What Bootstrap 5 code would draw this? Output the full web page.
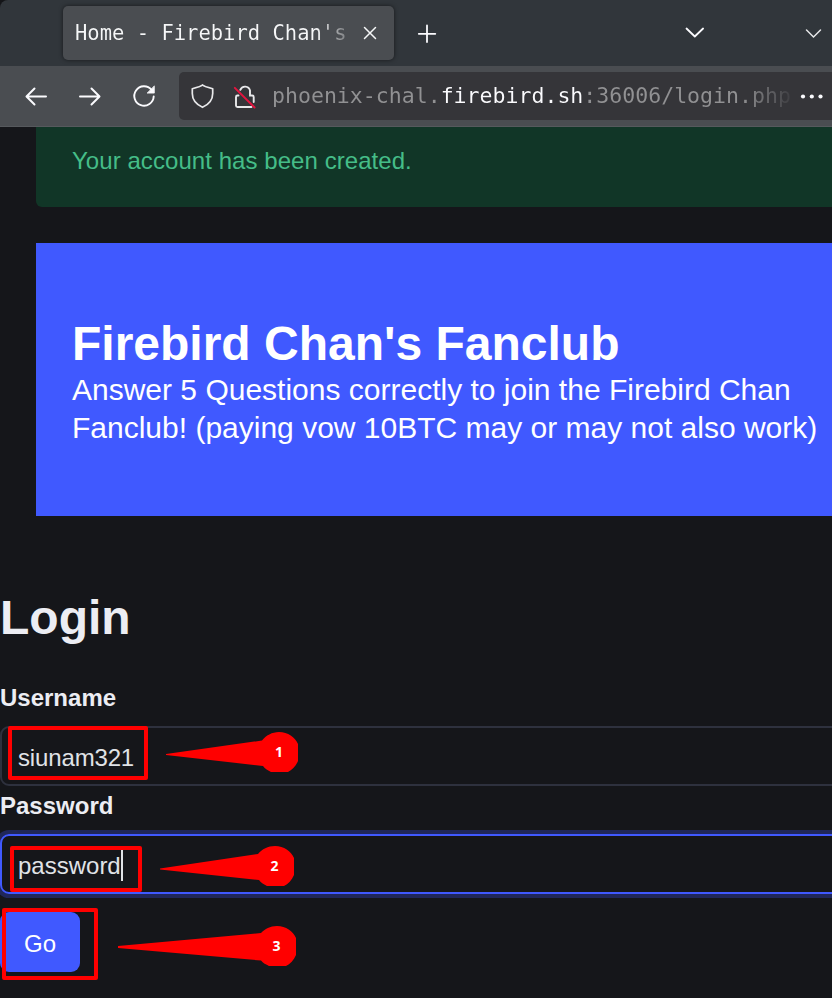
<!DOCTYPE html>
<html lang="en" data-bs-theme="dark">
<head>
<meta charset="utf-8">
<meta name="viewport" content="width=device-width, initial-scale=1">
<title>Home - Firebird Chan's Fanclub</title>
<link rel="stylesheet" href="https://cdn.jsdelivr.net/npm/bootstrap@5.3.0/dist/css/bootstrap.min.css">
<style>
  html, body { height: 998px; overflow: hidden; }
  body { background: #15161a; color: #ecedf3; font: 24px/36px "Liberation Sans", Arial, sans-serif; }
  svg { display: block; flex: none; }
  .mono { font-family: "DejaVu Sans Mono", monospace; white-space: pre; }
  .tabcorner { background: #141518; }
  .tabstrip { height: 66px; background: #31363b; padding: 6px 0 6px 63px; border-top-left-radius: 8px; }
  .browser-tab { width: 331px; height: 54px; margin-right: 23px; padding: 0 17px 0 12px; background: #4a4d51; border-radius: 5px; box-shadow: 0 0 4px rgba(0,0,0,.55); }
  .tab-title { width: 274px; font-size: 20.5px; line-height: 54px; background: linear-gradient(90deg,#f6f7f8 0 240px,#7b7d80 272px); -webkit-background-clip: text; background-clip: text; color: transparent; }
  .win-chevron { margin: 0 10px 0 100px; }
  .toolbar { height: 61px; background: #4a4d51; padding: 6px 0 7px 24px; border-bottom: 1px solid #56595d; }
  .navicons { gap: 30px; width: 155px; }
  .urlbar { height: 48px; background: #353539; border-radius: 5px 0 0 5px; padding-left: 12px; gap: 18px; }
  .address { width: 519px; margin-left: -3px; font-size: 21.55px; line-height: 46px; background: linear-gradient(90deg,#919193 0 168px,#fbfbfe 168px 311px,#919193 311px 470px,#404044 518px); -webkit-background-clip: text; background-clip: text; color: transparent; }
  .dots { margin-left: -9px; }
  .notice { height: 80px; margin-left: 36px; padding: 16px 36px; background: #113627; color: #45bd88; border-radius: 0 0 0 6px; letter-spacing: .06px; }
  .hero { height: 273px; margin: 36px 0 0 36px; padding: 72px 0 0 36px; background: #4059ff; color: #fff; white-space: nowrap; }
  .hero-title { font-size: 48px; line-height: 58px; font-weight: 700; margin: 0; }
  .hero-text { font-size: 30px; line-height: 37.5px; margin: -2px 0 0; }
  .login-title { font-size: 48px; line-height: 58px; font-weight: 700; margin: 73px 0 33px; color: #ecedf3; }
  .field-label { display: block; font-weight: 700; line-height: 36px; margin: 0 0 10px; }
  .field { width: 860px; height: 60px; padding: 3px 16px 0; background: transparent !important; border: 2px solid #2e313e; border-radius: 9px; color: #e0e3e7; font-size: 24px; line-height: 36px; letter-spacing: -.15px; }
  .field + .field-label { margin-top: 2px; }
  .field-focus { border-color: #4059ff; box-shadow: 0 0 0 4px #20275a; letter-spacing: 0; }
  .go { width: 80px; height: 60px; margin-top: 18px; background: #4059ff; border: 0; border-radius: 9px; color: #fff; font-size: 24px; padding: 3px 0 0; }
  .marks { position: absolute; left: 0; top: 0; pointer-events: none; }
  .marks text { font: 700 14px "Open Sans", sans-serif; fill: #fff; text-anchor: middle; }
</style>
</head>
<body>
<header>
  <div class="tabcorner">
    <div class="tabstrip d-flex align-items-center">
      <div class="browser-tab d-flex align-items-center">
        <div class="mono tab-title overflow-hidden">Home - Firebird Chan's</div>
        <svg class="ms-auto" width="14" height="14" viewBox="0 0 14 14" stroke="#f6f7f8" stroke-width="1.5" stroke-linecap="round"><path d="M1.500 1.500l11 11M12.500 1.500l-11 11"/></svg>
      </div>
      <svg width="20" height="20" viewBox="0 0 20 20" stroke="#fbfbfe" stroke-width="1.800" stroke-linecap="round"><path d="M10 2.500v16.500M1.800 10.800h16.500"/></svg>
      <svg class="ms-auto" width="20" height="14" viewBox="0 0 20 14" fill="none" stroke="#fbfbfe" stroke-width="1.800" stroke-linecap="round" stroke-linejoin="round"><path d="M1.500 2.500l8.300 8 8.300-8"/></svg>
      <svg class="win-chevron" width="17" height="14" viewBox="0 0 17 14" fill="none" stroke="#e6e7e8" stroke-width="1.500" stroke-linecap="round"><path d="M1.500 4l7 7 7-7"/></svg>
    </div>
  </div>
  <div class="toolbar d-flex align-items-center">
    <div class="navicons d-flex">
      <svg width="24" height="24" viewBox="0 0 24 24" fill="none" stroke="#fbfbfe" stroke-width="2" stroke-linecap="round" stroke-linejoin="round"><path d="M22 12.500H3M10.500 4.500l-8 8 8 8"/></svg>
      <svg width="24" height="24" viewBox="0 0 24 24" fill="none" stroke="#fbfbfe" stroke-width="2" stroke-linecap="round" stroke-linejoin="round"><path d="M2 12.500h19M13.500 4.500l8 8-8 8"/></svg>
      <svg width="24" height="24" viewBox="0 0 24 24" fill="none" stroke="#fbfbfe" stroke-width="1.900" stroke-linecap="round"><path d="M19.500 5.800A9.700 9.700 0 1 0 21.700 12.500"/><path d="M22.300 2.300v6.800h-6.800z" fill="#fbfbfe" stroke-width=".8" stroke-linejoin="round"/></svg>
    </div>
    <div class="urlbar d-flex align-items-center flex-grow-1">
      <svg width="24" height="26" viewBox="0 0 24 26" fill="none" stroke="#e8e8ea" stroke-width="1.700" stroke-linejoin="round"><path d="M11.500 2Q12.500 3.200 21.700 5.800V10.500c0 6-4 11-10.200 13.800C5.500 21.500 1.300 16.500 1.300 10.500V5.800Q10.500 3.200 11.500 2z"/></svg>
      <svg width="24" height="26" viewBox="0 0 24 26" fill="none" stroke="#e8e8ea" stroke-width="1.900" stroke-linecap="round"><path d="M7.300 6.800a5.100 5.100 0 0 1 9.700.7v5h2.200a1.500 1.500 0 0 1 1.500 1.500v5M5.500 12.500h-1a1.500 1.500 0 0 0-1.500 1.500v8.500c0 1 .5 1.500 1.500 1.500h14"/><path d="M1.800 4.800l19.800 19.700" stroke="#e5143f" stroke-width="1.900"/></svg>
      <div class="mono address overflow-hidden">phoenix-chal.firebird.sh:36006/login.php</div>
      <svg class="dots" width="24" height="6" viewBox="0 0 24 6" fill="#fbfbfe"><circle cx="3" cy="3.500" r="2.100"/><circle cx="11.800" cy="3.500" r="2.100"/><circle cx="20.500" cy="3.500" r="2.100"/></svg>
    </div>
  </div>
</header>
<main>
  <div class="notice">Your account has been created.</div>
  <section class="hero">
    <h1 class="hero-title">Firebird Chan's Fanclub</h1>
    <p class="hero-text">Answer 5 Questions correctly to join the Firebird Chan<br>Fanclub! (paying vow 10BTC may or may not also work)</p>
  </section>
  <form>
    <h2 class="login-title">Login</h2>
    <label class="field-label" for="user">Username</label>
    <input class="form-control field" id="user" type="text" value="siunam321">
    <label class="field-label" for="pass">Password</label>
    <input class="form-control field field-focus" id="pass" type="text" value="password">
    <button class="btn go" type="button">Go</button>
  </form>
</main>
<svg class="marks" width="832" height="998" viewBox="0 0 832 998" aria-hidden="true">
  <g fill="none" stroke="#f00" stroke-width="4" stroke-linejoin="round">
    <rect x="10" y="728" width="136" height="50"/>
    <rect x="12" y="848" width="128" height="42"/>
    <rect x="4" y="910" width="92" height="68"/>
  </g>
  <rect x="121" y="850" width="2" height="31" fill="#e0e3e7"/>
  <g fill="#f00">
    <path d="M166 754l96-13.500c4-5 10-8.500 17-8.500 9 0 16 5 19 12v17c-2 5-6 9-10 11h-17c-3-1.500-6-3-8-6l-97-11z"/>
    <path d="M160 868.500l98-14.500c4-5 10-8 17-8 9 0 16 5 19 12v17c-2 5-6 9-10 11h-17c-3-1.500-6-3-8-6l-99-10.500z"/>
    <path d="M118 946l143-13c4-4 9-7 16-7 9 0 16 5 19 12v17c-2 5-6 9-10 11h-17c-3-1.500-6-3-8-5.500L118 948z"/>
  </g>
  <text x="279" y="757">1</text><text x="274.500" y="871">2</text><text x="276.500" y="951">3</text>
</svg>
</body>
</html>
